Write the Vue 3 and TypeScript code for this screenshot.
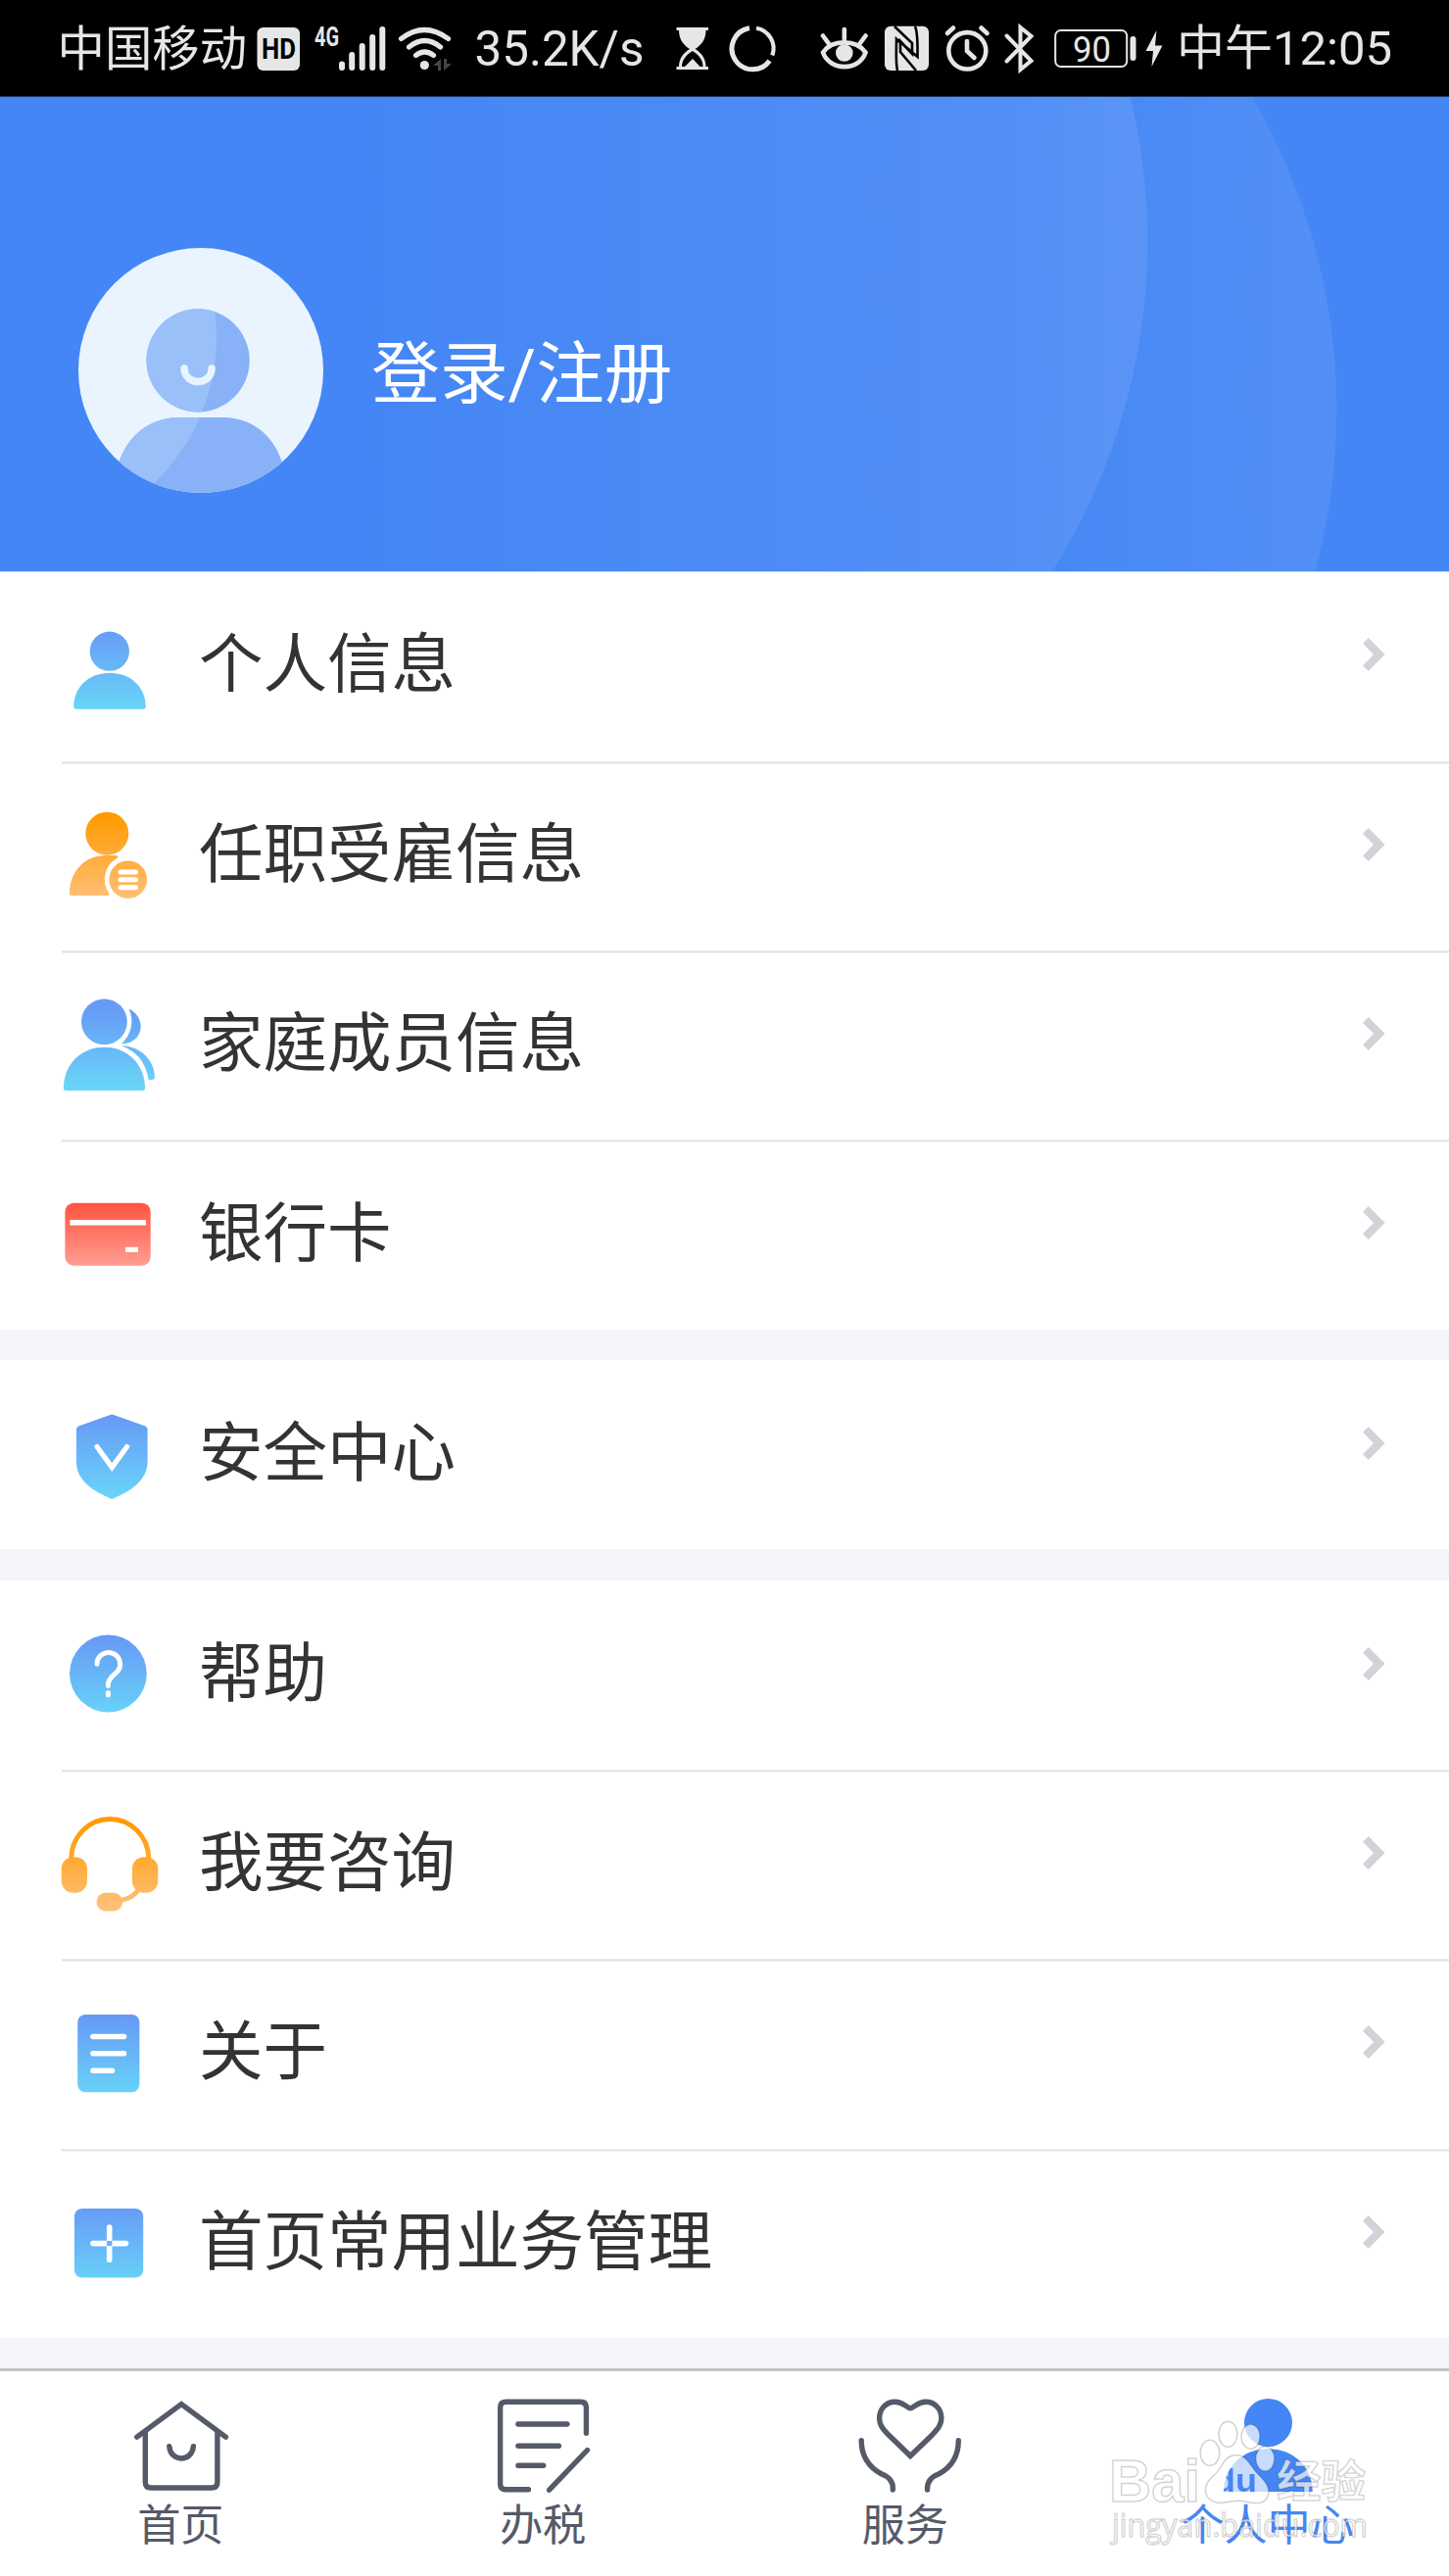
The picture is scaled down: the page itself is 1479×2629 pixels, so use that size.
<script setup lang="ts">
type IconName = 'person' | 'job' | 'family' | 'card' | 'shield' | 'help' | 'headset' | 'about' | 'plus'

interface MenuItem {
  icon: IconName
  label: string
}

interface Tab {
  icon: 'home' | 'tax' | 'service' | 'me'
  label: string
}

const groups: MenuItem[][] = [
  [
    { icon: 'person', label: '个人信息' },
    { icon: 'job', label: '任职受雇信息' },
    { icon: 'family', label: '家庭成员信息' },
    { icon: 'card', label: '银行卡' },
  ],
  [{ icon: 'shield', label: '安全中心' }],
  [
    { icon: 'help', label: '帮助' },
    { icon: 'headset', label: '我要咨询' },
    { icon: 'about', label: '关于' },
    { icon: 'plus', label: '首页常用业务管理' },
  ],
]

const tabs: Tab[] = [
  { icon: 'home', label: '首页' },
  { icon: 'tax', label: '办税' },
  { icon: 'service', label: '服务' },
  { icon: 'me', label: '个人中心' },
]

const activeTab: Tab['icon'] = 'me'
</script>

<template>
  <div class="screen">
    <svg class="defs" width="0" height="0">
      <defs>
        <linearGradient id="gBlue" gradientUnits="userSpaceOnUse" x1="0" y1="10" x2="0" y2="92">
          <stop offset="0" stop-color="#669af6" />
          <stop offset="1" stop-color="#69d4f8" />
        </linearGradient>
        <linearGradient id="gOrange" gradientUnits="userSpaceOnUse" x1="0" y1="8" x2="0" y2="94">
          <stop offset="0" stop-color="#ff9a00" />
          <stop offset="1" stop-color="#ffc078" />
        </linearGradient>
        <linearGradient id="gRed" gradientUnits="userSpaceOnUse" x1="0" y1="16" x2="0" y2="81">
          <stop offset="0" stop-color="#ff5340" />
          <stop offset="1" stop-color="#ff9d92" />
        </linearGradient>
      </defs>
    </svg>

    <div class="status">
      <span class="carrier">中国移动</span>
      <svg class="sys" width="202" height="98" viewBox="262 0 202 98">
        <rect x="262.5" y="28" width="43.5" height="44" rx="6" />
        <text x="267" y="60" class="hd" textLength="35" lengthAdjust="spacingAndGlyphs">HD</text>
        <text x="321" y="47" class="net" textLength="25" lengthAdjust="spacingAndGlyphs">4G</text>
        <g class="line" stroke-width="6">
          <path d="M349 65.500V69M359.200 56V69M369.700 47V69M380.200 38V69M390.300 30V69" />
        </g>
        <g class="line" stroke-width="5.200">
          <path d="M409.500 39.500Q433 21.500 457.500 39.500M417.500 48Q433.500 35 449.500 48M424.500 56.500Q433.500 49.500 442.500 56.500" />
        </g>
        <circle cx="433.300" cy="66.500" r="4.600" />
        <path d="M450 60V72H447V67H442ZM453 60H456V65H461L453 72Z" fill="#454545" />
      </svg>
      <span class="speed">35.2K/s</span>
      <svg class="sys" width="147" height="98" viewBox="690 0 147 98">
        <path fill-rule="evenodd" d="M690.500 28H723V31H720.500C720.500 40 716 46 709.500 50C716 54 720.500 60 720.500 68H723V71H690.500V68H693C693 60 697.500 54 704 50C697.500 46 693 40 693 31H690.500ZM706.800 52C701 55.500 696 61 696 68H699L707 60L714.500 68H717.500C717.500 61 713 55.500 706.800 52Z" />
        <path d="M772 28.700A21 21 0 0 1 788.300 56.500" class="line" style="stroke-linecap: butt" stroke-width="4.200" />
        <path d="M765 28.700A21.200 21.200 0 1 0 785.500 62" class="line" style="stroke-linecap: butt" stroke-width="5" />
      </svg>
      <svg class="sys" width="353" height="98" viewBox="837 0 353 98">
        <g class="line" stroke-width="4.600">
          <path d="M840 53.500C849 40 874 40 883.500 53.500C877 73 847 73 840 53.500ZM861.800 30V40M840 36.500L845.500 44M883.500 36.500L878 44" />
        </g>
        <circle cx="861.800" cy="54" r="8.800" />
        <rect x="903" y="26.700" width="45" height="45.300" rx="6" />
        <g fill="none" stroke="#000" stroke-width="2.600">
          <path d="M913 27L931 44V55L917 40M916 72C914 64 915 52 915 40L918 43M934 27C937 33 936.500 46 936.500 58L919 43V53L935 72" />
        </g>
        <g class="line" stroke-width="4.600">
          <ellipse cx="987.300" cy="51.800" rx="19" ry="18.700" />
          <path d="M987 42V52L994.500 59M967 34L973 28.500M1007.500 34L1001.500 28.500" />
        </g>
        <path class="line" stroke-width="4" d="M1027.500 36.500L1052.500 62L1041.500 71V28L1052.500 37L1027.500 62.500" />
        <rect x="1077.200" y="31" width="73" height="37" rx="5.500" fill="none" stroke="#e6e6e6" stroke-width="2" />
        <rect x="1153.500" y="37" width="6" height="25" rx="3" />
        <text x="1095" y="62.500" class="pct" textLength="39" lengthAdjust="spacingAndGlyphs">90</text>
        <path d="M1180.500 31L1169.500 52H1177L1175.500 68L1186.500 46.500H1179Z" />
      </svg>
      <span class="time">中午12:05</span>
    </div>

    <header class="profile">
      <svg class="waves" viewBox="0 99 1479 484" width="1479" height="484">
        <defs>
          <linearGradient id="wOuter" gradientUnits="userSpaceOnUse" x1="1000" y1="0" x2="1365" y2="0">
            <stop offset="0" stop-color="#fff" stop-opacity="0" />
            <stop offset="1" stop-color="#fff" stop-opacity="0.08" />
          </linearGradient>
          <linearGradient id="wInner" gradientUnits="userSpaceOnUse" x1="360" y1="0" x2="1171" y2="0">
            <stop offset="0" stop-color="#fff" stop-opacity="0" />
            <stop offset="1" stop-color="#fff" stop-opacity="0.09" />
          </linearGradient>
        </defs>
        <circle cx="731.300" cy="418" r="633" fill="url(#wOuter)" />
        <circle cx="541.300" cy="246.500" r="630" fill="url(#wInner)" />
      </svg>
      <svg class="avatar" width="250" height="252" viewBox="79.400 252 250 252">
        <defs>
          <clipPath id="face"><circle cx="204.400" cy="378" r="125" /></clipPath>
          <clipPath id="figure">
            <circle cx="201.500" cy="367.900" r="52.600" />
            <path d="M117 510V490C121 452 147 426 182 426H227C262 426 287 452 291 490V510Z" />
          </clipPath>
        </defs>
        <circle cx="204.400" cy="378" r="125" fill="#e9f4ff" />
        <g clip-path="url(#face)">
          <g clip-path="url(#figure)">
            <rect x="79" y="252" width="251" height="253" fill="#88b1f8" />
            <circle cx="14.400" cy="344" r="206" fill="#9ac0f9" />
          </g>
        </g>
        <path d="M187.500 376C188 394 215 394 215.500 376" fill="none" stroke="#e9f4ff" stroke-width="7.500" stroke-linecap="round" />
      </svg>
      <span class="login">登录/注册</span>
    </header>

    <main class="menu">
      <section v-for="(group, gi) in groups" :key="gi" class="group">
        <div v-for="item in group" :key="item.icon" class="row">
          <svg class="icon" width="102" height="100" viewBox="0 0 102 100">
            <g v-if="item.icon === 'person'" fill="url(#gBlue)">
              <circle cx="51.800" cy="33.700" r="20.100" />
              <path d="M18 92.700Q15.200 92.700 15.200 90C15.200 70 31 55.700 52 55.700S88.700 70 88.700 90Q88.700 92.700 86 92.700Z" />
            </g>
            <g v-else-if="item.icon === 'job'" fill="url(#gOrange)">
              <circle cx="49.300" cy="26.700" r="22" />
              <path d="M13 90.100Q11 90.100 11 88C11 66 26 49.100 48 49.100C53 49.100 57 48.800 59.500 49.600Q61.500 50.300 59.500 51.700A25 25 0 0 0 51.500 88Q52 90.100 50.500 90.100Z" />
              <circle cx="70.700" cy="73.700" r="19.300" />
              <path d="M63 66H78.500M63 73.700H78.500M63 81.700H78.500" stroke="#fff" stroke-width="5" stroke-linecap="round" />
            </g>
            <g v-else-if="item.icon === 'family'" fill="url(#gBlue)">
              <circle cx="46.400" cy="25.800" r="23.400" />
              <path d="M7.500 96Q4.900 96 4.900 93.500C4.900 70 22 51.700 46.400 51.700S88 70 88 93.500Q88 96 85.500 96Z" />
              <path d="M71.500 12.500C79 16 83.700 23 83.700 30.500C83.700 41 75 48.500 64 48.200C74 39 77.500 25 71.500 12.500Z" />
              <path d="M64 50.300C84 50.500 97.900 66 97.900 82Q97.900 85 95 85H91.700C89 68 80 56 64 50.300Z" />
            </g>
            <g v-else-if="item.icon === 'card'">
              <rect x="6.400" y="16.700" width="87.300" height="64" rx="9" fill="url(#gRed)" />
              <path d="M11.400 34H89V39.400H11.400ZM68 61.700H81V67H68Z" fill="#fff" />
            </g>
            <g v-else-if="item.icon === 'shield'">
              <path fill="url(#gBlue)" d="M52.500 9Q54.200 8 56 9L88.500 20.500Q90.600 21.500 90.600 24V56.500C90.600 75 75 86 56.500 94Q54.200 95.300 52 94C33.500 86 17.900 75 17.900 56.500V24Q17.900 21.500 20 20.500Z" />
              <path d="M39 41.500L54.300 62.500L69.600 41.500" fill="none" stroke="#fff" stroke-width="5.200" stroke-linecap="round" />
            </g>
            <g v-else-if="item.icon === 'help'">
              <circle cx="50.400" cy="48" r="39.400" fill="url(#gBlue)" />
              <path d="M39 38.300A11.800 11.800 0 1 1 60.500 45C57 49.500 50.400 52.500 50.400 59V60.500M50.400 67.500V70" fill="none" stroke="#fff" stroke-width="5" stroke-linecap="round" />
            </g>
            <g v-else-if="item.icon === 'headset'" fill="url(#gOrange)">
              <path d="M12.700 44A39.500 40.500 0 0 1 91.700 44" fill="none" stroke="url(#gOrange)" stroke-width="5" />
              <path d="M63 86.500Q76 84 81 76" fill="none" stroke="url(#gOrange)" stroke-width="5" />
              <rect x="2.700" y="42.300" width="26.300" height="36.500" rx="12" />
              <rect x="74.900" y="42.300" width="26.400" height="36.500" rx="12" />
              <rect x="38.500" y="78.800" width="26.500" height="18.700" rx="9" />
            </g>
            <g v-else-if="item.icon === 'about'">
              <rect x="19.200" y="9" width="63.200" height="79.300" rx="8" fill="url(#gBlue)" />
              <path d="M35 31.500H66.500M35 48.700H66.500M35 66.200H54.500" stroke="#fff" stroke-width="5.600" stroke-linecap="round" />
            </g>
            <g v-else>
              <rect x="15.900" y="14" width="70.300" height="70.600" rx="8" fill="url(#gBlue)" />
              <path d="M35 49.600H68.500M51.700 33V66.300" stroke="#fff" stroke-width="5.600" stroke-linecap="round" />
              <rect x="49" y="47" width="5.400" height="5.200" fill="#68b4f7" />
            </g>
          </svg>
          <span class="label">{{ item.label }}</span>
          <svg class="chevron" width="23" height="34" viewBox="0 0 23 34">
            <path d="M5.800 0L22.600 17L5.800 34L0 28.200L11 17L0 5.800Z" fill="#d2d3d9" />
          </svg>
        </div>
      </section>
    </main>

    <nav class="tabs">
      <div v-for="tab in tabs" :key="tab.icon" class="tab" :class="{ active: tab.icon === activeTab }">
        <svg class="tab-icon" width="110" height="100" viewBox="0 0 110 100">
          <g v-if="tab.icon === 'home'">
            <path d="M9.800 42.200L55.100 8.500L100.400 42.200M18.300 37V88Q18.300 94 24 94H86Q91.900 94 91.900 88V37M42.800 51.700C44 68 66 68 67.400 51.700" />
          </g>
          <g v-else-if="tab.icon === 'tax'">
            <path d="M98.400 38.300V12Q98.400 6.300 92.500 6.300H16.500Q10.600 6.300 10.600 12V90Q10.600 95.700 16.500 95.700H39.400M28.900 29H78.800M28.900 51.300H70.400M28.900 71.200H54.700M60.600 96.200L99.500 55.500" />
          </g>
          <g v-else-if="tab.icon === 'service'">
            <path d="M60.200 61.500L38 40C31 33 28.600 29 28.600 23C28.600 13 36 6.300 44.500 6.300C54 6.300 56 12.700 60.200 12.700S66.500 6.300 76 6.300C84.500 6.300 91.900 13 91.900 23C91.900 29 89 33 82.500 40ZM10.200 45.700C10.200 62 18 73 31 80C39 83 43 88 42.300 96M109.300 45.700C109.300 62 102 73 89 80C81 83 77 88 77.600 96" />
          </g>
          <g v-else class="solid">
            <circle cx="55.500" cy="27.500" r="24.500" />
            <path d="M10 98C10 72 30 54.300 55.300 54.300S100.700 72 100.700 98Z" />
          </g>
        </svg>
        <span class="tab-label">{{ tab.label }}</span>
      </div>
    </nav>

    <svg class="watermark" width="275" height="130" viewBox="1130 2470 275 130">
      <defs>
        <mask id="pad" maskUnits="userSpaceOnUse" x="1130" y="2470" width="275" height="130">
          <rect x="1130" y="2470" width="275" height="130" fill="#fff" />
          <text x="1239" y="2542.500" class="du" fill="#000" textLength="44" lengthAdjust="spacingAndGlyphs">du</text>
        </mask>
      </defs>
      <g class="mark">
        <text x="1132" y="2553" class="bai" textLength="93" lengthAdjust="spacingAndGlyphs">Bai</text>
        <g mask="url(#pad)">
          <path d="M1262 2505.500C1272 2505.500 1276 2516 1283 2524C1291 2532 1296 2537 1294.500 2546C1292 2557 1280 2555 1271 2553C1264 2551.500 1258 2552 1250 2554C1238 2556 1230 2550 1230.500 2540C1231 2530 1241 2527 1246 2518C1251 2509 1255 2505.500 1262 2505.500Z" />
        </g>
        <ellipse cx="1235" cy="2503.300" rx="9.800" ry="13" />
        <ellipse cx="1253.400" cy="2484.300" rx="9.500" ry="13" />
        <ellipse cx="1276.500" cy="2486.700" rx="9.500" ry="12.500" />
        <ellipse cx="1291.300" cy="2509.300" rx="9.500" ry="12.500" />
        <text x="1303" y="2549" class="jy" textLength="91" lengthAdjust="spacingAndGlyphs">经验</text>
        <text x="1135" y="2588.500" class="url" textLength="261" lengthAdjust="spacingAndGlyphs">jingyan.baidu.com</text>
      </g>
    </svg>
  </div>
</template>

<style>
body {
  margin: 0;
  background: #fff;
}
</style>

<style scoped>
.screen {
  position: relative;
  width: 1479px;
  height: 2629px;
  overflow: hidden;
  display: flex;
  flex-direction: column;
  background: #f4f5fa;
  font-family: Roboto, "Noto Sans CJK SC", sans-serif;
}

.defs {
  position: absolute;
}

.status {
  flex: none;
  display: flex;
  height: 98px;
  border-bottom: 1px solid #1d3662;
  background: #000;
  color: #e6e6e6;
  line-height: 100px;
  font-size: 49px;
  white-space: nowrap;
}

.carrier {
  box-sizing: border-box;
  flex: 0 0 262px;
  padding-left: 58.5px;
  font-size: 48.4px;
  line-height: 102px;
}

.speed {
  flex: 0 0 226px;
  box-sizing: border-box;
  padding-left: 20.5px;
  font-size: 49.3px;
}

.time {
  padding-left: 11px;
}

.sys {
  flex: none;
  fill: #e6e6e6;
}

.sys .line {
  fill: none;
  stroke: #e6e6e6;
  stroke-linecap: round;
}

.hd {
  font: 700 29px Roboto, sans-serif;
  fill: #000;
}

.net {
  font: 700 28px Roboto, sans-serif;
}

.pct {
  font: 400 37px Roboto, sans-serif;
}

.profile {
  position: relative;
  z-index: 1;
  flex: none;
  display: flex;
  align-items: flex-start;
  height: 484px;
  background: #4486f5;
  box-shadow: 0 1px 0 #c3dafc;
}

.waves {
  position: absolute;
  left: 0;
  top: 0;
}

.avatar {
  position: relative;
  margin: 153px 0 0 79.8px;
}

.login {
  position: relative;
  margin: 233px 0 0 49.5px;
  line-height: 100px;
  font-size: 69.6px;
  color: #fff;
}

.menu {
  flex: none;
  margin-top: 0.3px;
  display: flex;
  flex-direction: column;
  gap: 31.3px;
}

.group {
  background: #fff;
}

.row {
  display: flex;
  align-items: center;
  height: 193.35px;
  padding-left: 60.3px;
  padding-right: 65px;
}

.row + .row {
  background: linear-gradient(#ececee 0 1px, #dfe0e4 1px 2px, #f3f3f5 2px 3px) 63px 0 / 100% 3px no-repeat;
}

.icon {
  flex: none;
  margin-top: 1.5px;
  overflow: visible;
}

.label {
  flex: 1;
  margin-left: 40.8px;
  margin-top: -1px;
  font-size: 65.5px;
  line-height: 96px;
  color: #333;
}

.chevron {
  flex: none;
  margin-top: -23.5px;
}

.tabs {
  flex: 1;
  margin-top: 30.6px;
  display: flex;
  border-top: 3px solid #c3c4ca;
  background: #fff;
  color: #555a68;
}

.tab {
  flex: 1 1 0;
  display: flex;
  flex-direction: column;
  align-items: center;
  padding-top: 25px;
}

.tab-icon {
  flex: none;
  overflow: visible;
  fill: none;
  stroke: currentColor;
  stroke-width: 5.4;
  stroke-linecap: round;
}

.tab-icon .solid {
  fill: currentColor;
  stroke: none;
}

.tab-label {
  margin-top: 3.5px;
  margin-right: 1px;
  font-size: 44.2px;
  line-height: 60px;
}

.active {
  color: #4486f5;
}

.watermark {
  position: absolute;
  left: 1130px;
  top: 2470px;
}

.mark {
  fill: #fff;
  fill-opacity: 0.7;
  stroke: #000;
  stroke-opacity: 0.18;
  stroke-width: 1.5;
}

.bai {
  font: 700 61px "Liberation Sans", sans-serif;
}

.du {
  font: 700 34px "Liberation Sans", sans-serif;
  fill-opacity: 1;
  stroke: none;
}

.jy {
  font: 700 45px "Noto Sans CJK SC", sans-serif;
}

.url {
  font: 400 32px "Open Sans", sans-serif;
}
</style>
